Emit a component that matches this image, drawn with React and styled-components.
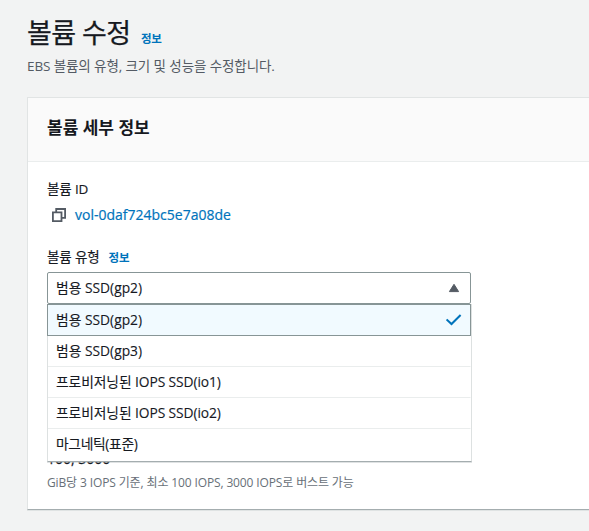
import React from "react";
import styled, { createGlobalStyle } from "styled-components";

const GlobalStyle = createGlobalStyle`
  *, *::before, *::after { box-sizing: border-box; }
  body {
    margin: 0;
    background: #f2f3f3;
    color: #16191f;
    font-family: "Open Sans", "Noto Sans CJK KR", sans-serif;
    font-size: 14px;
    overflow: hidden;
  }
`;

const Page = styled.main`
  height: 531px;
  padding: 15px 0 0 27px;
  overflow: hidden;
`;

const TitleRow = styled.header`
  display: flex;
  align-items: baseline;
  gap: 10.5px;
  height: 38px;
  line-height: 36px;
`;

const Title = styled.h1`
  margin: 0;
  font-size: 27px;
  font-weight: 400;
  -webkit-text-stroke: 0.25px;
  letter-spacing: -0.6px;
  white-space: nowrap;
`;

const InfoLink = styled.a`
  color: #0073bb;
  font-size: 11.5px;
  font-weight: 700;
  letter-spacing: -0.1px;
  -webkit-text-stroke: 0;
`;

const Description = styled.p`
  margin: 3px 0 0;
  height: 20px;
  line-height: 20px;
  font-size: 13.5px;
  letter-spacing: -0.1px;
  color: #545b64;
  white-space: nowrap;
`;

const Panel = styled.section`
  width: 700px;
  height: 413px;
  margin-top: 21px;
  background: #fff;
  border: 1px solid #e1e4e4;
  border-bottom: 1px solid #a4adaf;
  box-shadow: 0 1px 0 #dfe3e3;
`;

const PanelHeader = styled.div`
  display: flex;
  align-items: center;
  height: 64px;
  padding: 0 0 4px 19px;
  background: #fafafa;
  border-bottom: 1px solid #eaeded;
`;

const PanelTitle = styled.h2`
  margin: 0;
  font-size: 17px;
  font-weight: 700;
  line-height: 24px;
  letter-spacing: 0;
`;

const PanelBody = styled.div`
  padding: 17px 0 0 19px;
`;

const Label = styled.div`
  display: flex;
  align-items: baseline;
  gap: 9px;
  height: 20px;
  line-height: 20px;
  font-size: 13.5px;
  -webkit-text-stroke: 0.15px;
  letter-spacing: -0.15px;
`;

const VolumeRow = styled.div`
  display: flex;
  align-items: center;
  height: 22px;
  margin: 5px 0 21px;
  padding-left: 4px;
  gap: 8px;
`;

const VolumeLink = styled.a`
  color: #0073bb;
  font-size: 14px;
  -webkit-text-stroke: 0.2px;
  line-height: 22px;
`;

const SelectField = styled.div`
  position: relative;
  width: 424px;
  margin-top: 5px;
`;

const Trigger = styled.div`
  display: flex;
  align-items: center;
  justify-content: space-between;
  height: 32px;
  padding: 0 10px 0 8px;
  border: 1px solid #879596;
  border-radius: 2px;
  background: #fff;
`;

const Menu = styled.ul`
  position: absolute;
  z-index: 1;
  top: 32px;
  left: 0;
  width: 425px;
  height: 158px;
  margin: 0;
  padding: 0;
  list-style: none;
  background: #fff;
  border: 1px solid #dde1e1;
  border-top: 0;
  border-bottom-color: #a4adaf;
  box-shadow: 0 1px 0 rgba(164, 173, 175, 0.35);
`;

const Option = styled.li`
  display: flex;
  align-items: center;
  justify-content: space-between;
  height: ${({ $selected }) => ($selected ? "32px" : "31px")};
  margin: ${({ $selected }) => ($selected ? "0 0 0 -1px" : "0")};
  padding: 0 8px;
  background: ${({ $selected }) => ($selected ? "#f1faff" : "#fff")};
  border: 1px solid ${({ $selected }) => ($selected ? "#879596" : "transparent")};
  border-bottom-color: ${({ $selected }) => ($selected ? "#879596" : "#eaeded")};
  ${({ $selected }) => !$selected && "border-left: 0; border-top: 0;"}
  &:last-child { border-bottom: 0; height: 30px; }
`;

const OptionText = styled.span`
  font-size: 13.8px;
  -webkit-text-stroke: 0.12px;
  line-height: 20px;
  letter-spacing: ${({ $spacing }) => $spacing || "0px"};
  white-space: nowrap;
`;

const Value = styled.div`
  margin-top: 145px;
  height: 20px;
  line-height: 20px;
  font-size: 14px;
  -webkit-text-stroke: 0.25px;
`;

const Hint = styled.div`
  margin-top: 5px;
  height: 18px;
  line-height: 18px;
  font-size: 12px;
  letter-spacing: -0.13px;
  color: #687078;
  white-space: nowrap;
`;

const CopyIcon = () => (
  <svg width="16" height="16" viewBox="0 0 16 16" fill="none" stroke="#545b64" strokeWidth="1.8">
    <path d="M1.9 5.4h8.6v8.7H1.9z" />
    <path d="M5.2 5.2V2h8.9v8.8h-3.4" />
  </svg>
);

const CaretIcon = () => (
  <svg width="12" height="10" viewBox="0 0 12 10">
    <path d="M6 1.3 10.6 8.6H1.4Z" fill="#545b64" stroke="#545b64" strokeLinejoin="round" />
  </svg>
);

const CheckIcon = () => (
  <svg width="16" height="14" viewBox="0 0 16 14" fill="none" stroke="#0073bb" strokeWidth="2">
    <path d="m.6 6.4 4.9 4.6 9.1-9" />
  </svg>
);

const options = [
  { label: "범용 SSD(gp2)", selected: true },
  { label: "범용 SSD(gp3)" },
  { label: "프로비저닝된 IOPS SSD(io1)", spacing: "-0.1px" },
  { label: "프로비저닝된 IOPS SSD(io2)", spacing: "-0.1px" },
  { label: "마그네틱(표준)", spacing: "-0.35px" },
];

export default function App() {
  return (
    <Page>
      <GlobalStyle />
      <TitleRow>
        <Title>볼륨 수정</Title>
        <InfoLink>정보</InfoLink>
      </TitleRow>
      <Description>EBS 볼륨의 유형, 크기 및 성능을 수정합니다.</Description>
      <Panel>
        <PanelHeader>
          <PanelTitle>볼륨 세부 정보</PanelTitle>
        </PanelHeader>
        <PanelBody>
          <Label>볼륨 ID</Label>
          <VolumeRow>
            <CopyIcon />
            <VolumeLink>vol-0daf724bc5e7a08de</VolumeLink>
          </VolumeRow>
          <Label>
            볼륨 유형
            <InfoLink>정보</InfoLink>
          </Label>
          <SelectField>
            <Trigger>
              <OptionText>범용 SSD(gp2)</OptionText>
              <CaretIcon />
            </Trigger>
            <Menu>
              {options.map(({ label, selected, spacing }) => (
                <Option key={label} $selected={selected}>
                  <OptionText $spacing={spacing}>{label}</OptionText>
                  {selected && <CheckIcon />}
                </Option>
              ))}
            </Menu>
          </SelectField>
          <Value>100, 3000</Value>
          <Hint>GiB당 3 IOPS 기준, 최소 100 IOPS, 3000 IOPS로 버스트 가능</Hint>
        </PanelBody>
      </Panel>
    </Page>
  );
}
